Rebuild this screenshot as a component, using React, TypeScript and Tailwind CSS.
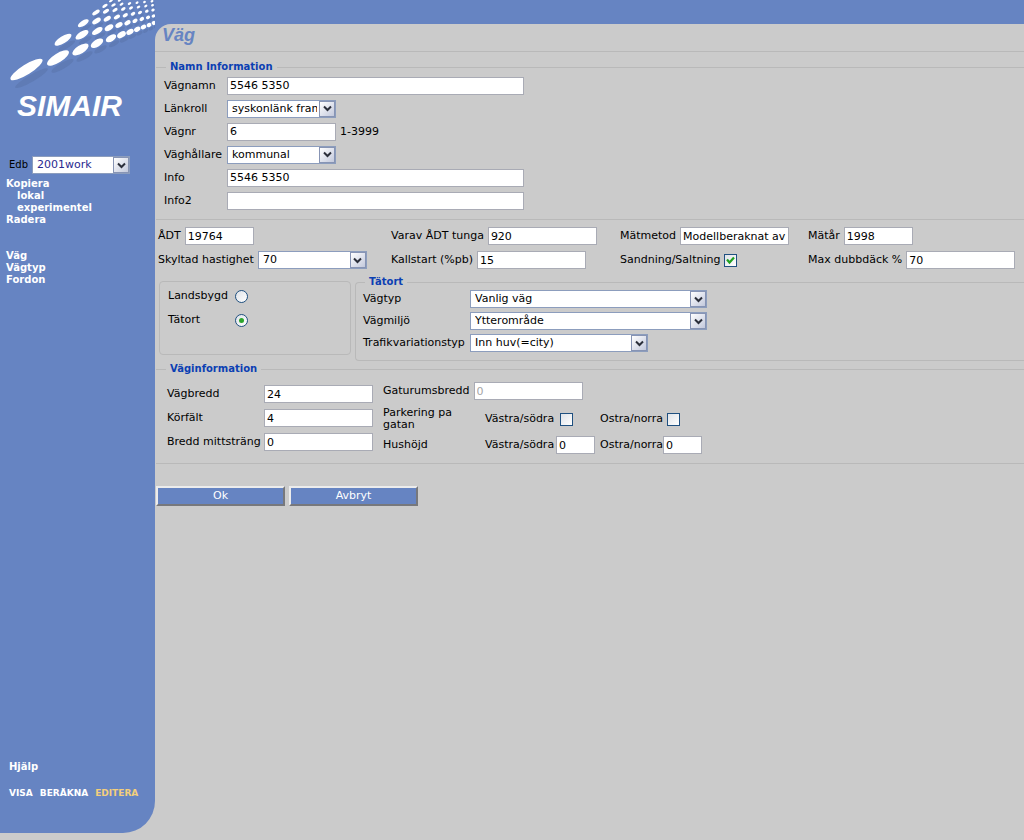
import React, { JSX } from "react";

type FieldProps = {
  id: string;
  value?: string;
  className?: string;
  disabled?: boolean;
};

function TextField({ id, value = "", className = "w-[109px]", disabled }: FieldProps) {
  return (
    <input
      id={id}
      type="text"
      defaultValue={value}
      disabled={disabled}
      className={`h-[18px] shrink-0 border border-[#a9abb5] bg-white px-[2px] text-black disabled:text-[#a5a5a5] ${className}`}
    />
  );
}

type SelectProps = {
  id: string;
  options: string[];
  className?: string;
  textClass?: string;
};

function SelectField({ id, options, className = "w-[109px]", textClass = "text-black" }: SelectProps) {
  return (
    <div className={`relative h-[18px] shrink-0 ${className}`}>
      <select
        id={id}
        className={`block h-full w-full appearance-none border border-[#8c9dbd] bg-white pr-[18px] pl-1 leading-4 ${textClass}`}
      >
        {options.map((option) => (
          <option key={option}>{option}</option>
        ))}
      </select>
      <span className="pointer-events-none absolute top-px right-px flex h-4 w-4 items-center justify-center border border-[#8794b4] bg-linear-to-br from-white to-[#c3c9dc]">
        <svg width="9" height="7" viewBox="0 0 9 7">
          <path d="M1 1.5 L4.5 5 L8 1.5" fill="none" stroke="#2b2f3a" strokeWidth="2" />
        </svg>
      </span>
    </div>
  );
}

function Check({ id, checked }: { id: string; checked?: boolean }) {
  return (
    <span className="relative flex h-[13px] w-[13px] shrink-0">
      <input
        id={id}
        type="checkbox"
        defaultChecked={checked}
        className="peer h-full w-full appearance-none border border-[#1f5080] bg-linear-to-br from-[#dfe3e8] to-white"
      />
      <svg
        viewBox="0 0 13 13"
        className="pointer-events-none absolute inset-0 hidden peer-checked:block"
      >
        <path d="M3 5.5 L5.5 8.5 L10 3.5" fill="none" stroke="#21a121" strokeWidth="2.2" />
      </svg>
    </span>
  );
}

function Radio({ id, checked }: { id: string; checked?: boolean }) {
  return (
    <span className="relative flex h-[13px] w-[13px] shrink-0">
      <input
        id={id}
        type="radio"
        name="omrade"
        defaultChecked={checked}
        className="peer h-full w-full appearance-none rounded-full border border-[#1f5080] bg-linear-to-br from-[#dfe3e8] to-white"
      />
      <span className="pointer-events-none absolute inset-1 hidden rounded-full bg-[#2ba52b] peer-checked:block" />
    </span>
  );
}

// x, y, rx, ry of each dot in the fan, from the largest to the smallest
const dots = [
  [26.5, 69.5, 18.7, 5],
  [58, 58, 12.6, 4.5],
  [80.5, 49.5, 9.2, 4],
  [97, 43.3, 7, 3.5],
  [111, 38.3, 5.8, 3.1],
  [121.5, 34.7, 4.8, 2.8],
  [130, 31.9, 4, 2.5],
  [137.2, 29.3, 3.4, 2.3],
  [143.5, 27, 2.9, 2.2],
  [149, 25, 2.5, 2.1],
  [153.8, 23, 2.1, 2],
  [63, 39.7, 9.8, 3.5],
  [82, 34.8, 7.4, 3.2],
  [97.3, 31, 6, 2.8],
  [109, 27.8, 4.8, 2.6],
  [119, 25, 4, 2.3],
  [127.5, 22.8, 3.4, 2.1],
  [135, 20.8, 2.8, 1.9],
  [141.8, 19, 2.5, 1.8],
  [148, 17.4, 2.2, 1.7],
  [153.5, 16, 1.9, 1.6],
  [83.3, 23.2, 6.2, 2.6],
  [96.5, 21, 4.8, 2.4],
  [107.3, 18.8, 4, 2.1],
  [116.9, 17, 3.4, 1.9],
  [125.3, 15.3, 2.9, 1.7],
  [133, 13.8, 2.5, 1.6],
  [140, 12.5, 2.2, 1.5],
  [146.8, 11.2, 1.9, 1.4],
  [153, 10, 1.7, 1.4],
  [96, 12.5, 4.2, 1.9],
  [106, 11.2, 3.4, 1.7],
  [115, 10, 2.9, 1.6],
  [123.3, 8.9, 2.5, 1.5],
  [131, 7.9, 2.2, 1.4],
  [138.5, 7, 1.9, 1.3],
  [145.8, 6, 1.7, 1.2],
  [152.5, 5.2, 1.5, 1.2],
  [105, 5.8, 3, 1.4],
  [113.5, 5, 2.5, 1.3],
  [121.5, 4.2, 2.2, 1.2],
  [129.5, 3.4, 1.9, 1.2],
  [137, 2.7, 1.7, 1.1],
  [144.5, 2, 1.5, 1.1],
  [152, 1.2, 1.5, 1.1],
  [111, 0.8, 2.2, 1],
  [119.5, 0.3, 1.9, 1],
];

function Logo() {
  return (
    <svg viewBox="0 0 155 90" className="block h-[90px] w-[155px]" aria-hidden="true">
      {dots.map(([x, y, rx, ry]) => (
        <ellipse
          key={`s${x}-${y}`}
          cx={x}
          cy={y + ry * 2}
          rx={rx}
          ry={ry * 0.7}
          fill="#5872a8"
          opacity="0.5"
          transform={`rotate(-30 ${x} ${y})`}
        />
      ))}
      {dots.map(([x, y, rx, ry]) => (
        <ellipse
          key={`${x}-${y}`}
          cx={x}
          cy={y}
          rx={rx}
          ry={ry}
          fill="#fff"
          transform={`rotate(-32 ${x} ${y})`}
        />
      ))}
    </svg>
  );
}

function Sidebar() {
  return (
    <aside className="mb-[7px] flex w-[155px] shrink-0 flex-col rounded-br-[32px] bg-[#6684c2] text-[10px] font-bold text-white">
      <Logo />
      <h1 className="pl-[17px] font-['Liberation_Sans',Arial,sans-serif] text-[30px] leading-8 italic">
        SIMAIR
      </h1>
      <div className="mt-[34px] flex items-center gap-1 pl-[9px] font-normal">
        <label htmlFor="edb" className="text-black">
          Edb
        </label>
        <SelectField
          id="edb"
          options={["2001work"]}
          className="w-[98px]"
          textClass="text-[11px] text-[#2a2a90]"
        />
      </div>
      <nav className="mt-1 flex flex-col items-start pl-[6px] leading-3">
        <a href="#kopiera">Kopiera</a>
        <a href="#lokal" className="pl-[11px]">lokal</a>
        <a href="#experimentel" className="pl-[11px]">experimentel</a>
        <a href="#radera">Radera</a>
        <a href="#vag" className="mt-6">Väg</a>
        <a href="#vagtyp">Vägtyp</a>
        <a href="#fordon">Fordon</a>
      </nav>
      <nav className="mt-auto flex flex-col items-start gap-[14px] pb-[34px] pl-[9px] leading-3">
        <a href="#hjalp">Hjälp</a>
        <div className="flex gap-[7px] text-[9px]">
          <a href="#visa">VISA</a>
          <a href="#berakna">BERÄKNA</a>
          <a href="#editera" className="text-[#f3cf7c]">EDITERA</a>
        </div>
      </nav>
    </aside>
  );
}

function NameInfo() {
  return (
    <fieldset className="border-y border-[#b9b9b9] pb-[7px] pl-2">
      <legend className="ml-[2px] px-1 text-[10px] leading-[14px] font-bold text-[#0b3fb3]">
        Namn Information
      </legend>
      <div className="grid auto-rows-[23px] grid-cols-[59px_1fr] items-center gap-x-1">
        <label htmlFor="vagnamn">Vägnamn</label>
        <TextField id="vagnamn" value="5546 5350" className="w-[297px]" />
        <label htmlFor="lankroll">Länkroll</label>
        <SelectField id="lankroll" options={["syskonlänk fram"]} />
        <label htmlFor="vagnr">Vägnr</label>
        <div className="flex items-center gap-1">
          <TextField id="vagnr" value="6" />
          <span>1-3999</span>
        </div>
        <label htmlFor="vaghallare">Väghållare</label>
        <SelectField id="vaghallare" options={["kommunal"]} />
        <label htmlFor="info">Info</label>
        <TextField id="info" value="5546 5350" className="w-[297px]" />
        <label htmlFor="info2">Info2</label>
        <TextField id="info2" className="w-[297px]" />
      </div>
    </fieldset>
  );
}

function Traffic() {
  return (
    <div className="grid auto-rows-[24px] grid-cols-[233fr_229fr_188fr_208fr] items-center py-1 pr-2 pl-[2px]">
      <div className="flex items-center gap-1">
        <label htmlFor="adt">ÅDT</label>
        <TextField id="adt" value="19764" className="w-[69px]" />
      </div>
      <div className="flex items-center gap-1">
        <label htmlFor="tunga">Varav ÅDT tunga</label>
        <TextField id="tunga" value="920" />
      </div>
      <div className="flex items-center gap-1">
        <label htmlFor="metod">Mätmetod</label>
        <TextField id="metod" value="Modellberaknat av" />
      </div>
      <div className="flex items-center gap-1">
        <label htmlFor="matar">Mätår</label>
        <TextField id="matar" value="1998" className="w-[69px]" />
      </div>
      <div className="flex items-center gap-1">
        <label htmlFor="hastighet">Skyltad hastighet</label>
        <SelectField id="hastighet" options={["70"]} />
      </div>
      <div className="flex items-center gap-1">
        <label htmlFor="kallstart">Kallstart (%pb)</label>
        <TextField id="kallstart" value="15" />
      </div>
      <div className="flex items-center gap-1">
        <label htmlFor="sandning">Sandning/Saltning</label>
        <Check id="sandning" checked />
      </div>
      <div className="flex items-center gap-1">
        <label htmlFor="dubb">Max dubbdäck %</label>
        <TextField id="dubb" value="70" />
      </div>
    </div>
  );
}

function Area() {
  return (
    <div className="flex items-start gap-1 pl-[3px]">
      <fieldset className="mt-[5px] h-[74px] w-[192px] shrink-0 rounded border border-[#b9b9b9] pt-[2px] pl-2">
        <div className="grid auto-rows-[24px] grid-cols-[67px_13px] items-center">
          <label htmlFor="landsbygd">Landsbygd</label>
          <Radio id="landsbygd" />
          <label htmlFor="tatort">Tätort</label>
          <Radio id="tatort" checked />
        </div>
      </fieldset>
      <fieldset className="min-w-0 flex-1 rounded-l border border-r-0 border-[#b9b9b9] pb-[6px] pl-[7px]">
        <legend className="ml-[2px] px-1 text-[10px] leading-3 font-bold text-[#0b3fb3]">Tätort</legend>
        <div className="grid auto-rows-[22px] grid-cols-[103px_1fr] items-center gap-x-1">
          <label htmlFor="vagtyp">Vägtyp</label>
          <SelectField id="vagtyp" options={["Vanlig väg"]} className="w-[237px]" />
          <label htmlFor="vagmiljo">Vägmiljö</label>
          <SelectField id="vagmiljo" options={["Ytterområde"]} className="w-[237px]" />
          <label htmlFor="variation">Trafikvariationstyp</label>
          <SelectField id="variation" options={["Inn huv(=city)"]} className="w-[178px]" />
        </div>
      </fieldset>
    </div>
  );
}

function RoadInfo() {
  return (
    <fieldset className="mt-[2px] border-y border-[#b9b9b9] pb-[9px] pl-[11px]">
      <legend className="-ml-[1px] px-1 text-[10px] leading-3 font-bold text-[#0b3fb3]">
        Väginformation
      </legend>
      <div className="flex items-start gap-[10px]">
        <div className="mt-[7px] grid auto-rows-[24px] grid-cols-[93px_109px] items-center gap-x-1">
          <label htmlFor="bredd">Vägbredd</label>
          <TextField id="bredd" value="24" />
          <label htmlFor="korfalt">Körfält</label>
          <TextField id="korfalt" value="4" />
          <label htmlFor="mitt">Bredd mittsträng</label>
          <TextField id="mitt" value="0" />
        </div>
        <div className="mt-1">
          <div className="flex h-6 items-center gap-1">
            <label htmlFor="gaturum">Gaturumsbredd</label>
            <TextField id="gaturum" value="0" disabled />
          </div>
          <div className="grid grid-cols-[102px_71px_44px_63px_39px] items-center gap-y-px">
            <span className="w-[85px] py-1 leading-3 whitespace-normal">Parkering pa gatan</span>
            <label htmlFor="park-v">Västra/södra</label>
            <div className="pl-1">
              <Check id="park-v" />
            </div>
            <label htmlFor="park-o">Ostra/norra</label>
            <div className="pl-1">
              <Check id="park-o" />
            </div>
            <span>Hushöjd</span>
            <label htmlFor="hus-v">Västra/södra</label>
            <TextField id="hus-v" value="0" className="w-[39px]" />
            <label htmlFor="hus-o">Ostra/norra</label>
            <TextField id="hus-o" value="0" className="w-[39px]" />
          </div>
        </div>
      </div>
    </fieldset>
  );
}

const buttonClass =
  "h-5 w-[129px] border-2 border-t-[#ececec] border-r-[#77787c] border-b-[#77787c] border-l-[#ececec] bg-[#6684c2] leading-4 text-white";

export default function App(): JSX.Element {
  return (
    <div className="flex min-h-screen bg-[#cbcbcb] font-['DejaVu_Sans',Verdana,sans-serif] text-[11px] leading-4 whitespace-nowrap text-black">
      <Sidebar />
      <div className="flex min-w-0 flex-1 flex-col overflow-hidden">
        <div className="h-6 bg-[#6684c2]" />
        <div className="bg-[#6684c2]">
          <h2 className="h-7 rounded-tl-[16px] border-b border-[#b9b9b9] bg-[#cbcbcb] pl-[7px] font-['Liberation_Sans',Arial,sans-serif] text-[18px] leading-[22px] font-bold text-[#6684c2] italic">
            Väg
          </h2>
        </div>
        <form className="mt-2 pl-px" onSubmit={(e) => e.preventDefault()}>
          <NameInfo />
          <Traffic />
          <Area />
          <RoadInfo />
          <div className="mt-[22px] flex gap-1">
            <button type="submit" className={buttonClass}>
              Ok
            </button>
            <button type="button" className={buttonClass}>
              Avbryt
            </button>
          </div>
        </form>
      </div>
    </div>
  );
}
